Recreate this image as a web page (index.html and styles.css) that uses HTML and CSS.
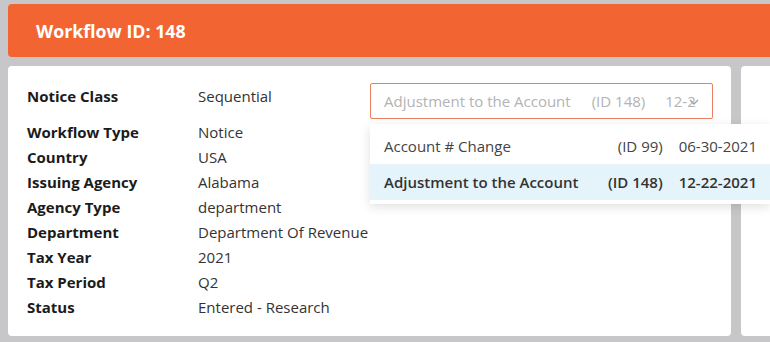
FILE: index.html
```html
<!DOCTYPE html>
<html>
<head>
<meta charset="utf-8">
<link rel="stylesheet" href="styles.css">
</head>
<body>
<div class="page">
  <header class="banner">Workflow ID: 148</header>
  <div class="cards">
    <section class="card main">
      <dl class="info">
        <dt class="first">Notice Class</dt><dd class="first">Sequential</dd>
        <dt>Workflow Type</dt><dd>Notice</dd>
        <dt>Country</dt><dd>USA</dd>
        <dt>Issuing Agency</dt><dd>Alabama</dd>
        <dt>Agency Type</dt><dd>department</dd>
        <dt>Department</dt><dd>Department Of Revenue</dd>
        <dt>Tax Year</dt><dd>2021</dd>
        <dt>Tax Period</dt><dd>Q2</dd>
        <dt>Status</dt><dd>Entered - Research</dd>
      </dl>
      <div class="picker">
        <div class="select">
          <span class="sel-text"><span>Adjustment to the Account</span><span class="gap">(ID 148)</span><span class="gap2">12-2</span></span>
          <svg class="chev" width="10" height="8" viewBox="0 0 10 8"><path d="M1 2 L5 6 L9 2" fill="none" stroke="#a0a0a0" stroke-width="1.3"/></svg>
        </div>
        <ul class="menu">
          <li class="opt"><span class="name">Account # Change</span><span class="id">(ID 99)</span><span class="date">06-30-2021</span></li>
          <li class="opt active"><span class="name">Adjustment to the Account</span><span class="id">(ID 148)</span><span class="date">12-22-2021</span></li>
        </ul>
      </div>
    </section>
    <section class="card side"></section>
  </div>
</div>
</body>
</html>
```
FILE: styles.css
```css
html, body {
  margin: 0;
  padding: 0;
}
body {
  background: #c7c7c9;
  font-family: "Open Sans", "Noto Sans", sans-serif;
  overflow: hidden;
  width: 770px;
  height: 342px;
}
.page {
  width: 820px;
  padding: 4px 0 0 8px;
}
.banner {
  height: 53px;
  background: #f26532;
  border-radius: 4px;
  color: #fff;
  font-weight: 700;
  font-size: 17.8px;
  line-height: 54px;
  padding-left: 28px;
  box-sizing: border-box;
}
.cards {
  display: flex;
  gap: 10px;
  margin-top: 9px;
}
.card {
  background: #fff;
  border-radius: 4px;
  height: 270px;
  box-sizing: border-box;
  flex-shrink: 0;
}
.main {
  width: 723px;
  display: flex;
  justify-content: space-between;
  padding: 17px 18px 0 19px;
  position: relative;
}
.side {
  width: 100px;
}
.info {
  margin: 0;
  padding-top: 1px;
  display: grid;
  grid-template-columns: 171px auto;
  grid-template-rows: 36px;
  grid-auto-rows: 25px;
  font-size: 15px;
  line-height: 25px;
  align-self: flex-start;
}
.info dt {
  font-weight: 700;
  color: #1b1b1b;
}
.info dd {
  margin: 0;
  color: #333;
}
.picker {
  width: 343px;
  position: relative;
  flex-shrink: 0;
}
.select {
  height: 36px;
  border: 1px solid #e9805f;
  border-radius: 2px;
  box-sizing: border-box;
  display: flex;
  align-items: center;
  padding: 0 14px 0 13px;
  position: relative;
  font-size: 15px;
  color: #b3b3b3;
}
.sel-text {
  white-space: nowrap;
}
.sel-text .gap { margin-left: 21px; }
.sel-text .gap2 { margin-left: 20px; }
.chev {
  position: absolute;
  right: 13px;
  top: 14px;
}
.menu {
  position: absolute;
  top: 41px;
  left: 0;
  width: 400px;
  margin: 0;
  padding: 4px 0 4px;
  list-style: none;
  background: #fff;
  box-shadow: 0 3px 10px rgba(0,0,0,0.12);
  z-index: 2;
  font-size: 15px;
}
.opt {
  display: flex;
  height: 36px;
  align-items: center;
  padding: 0 13px 0 14px;
  color: #444;
}
.opt .name { flex: 1; }
.opt .date { margin-left: 16px; }
.opt.active {
  background: #e5f3fb;
  font-weight: 600;
  color: #333;
}
```
